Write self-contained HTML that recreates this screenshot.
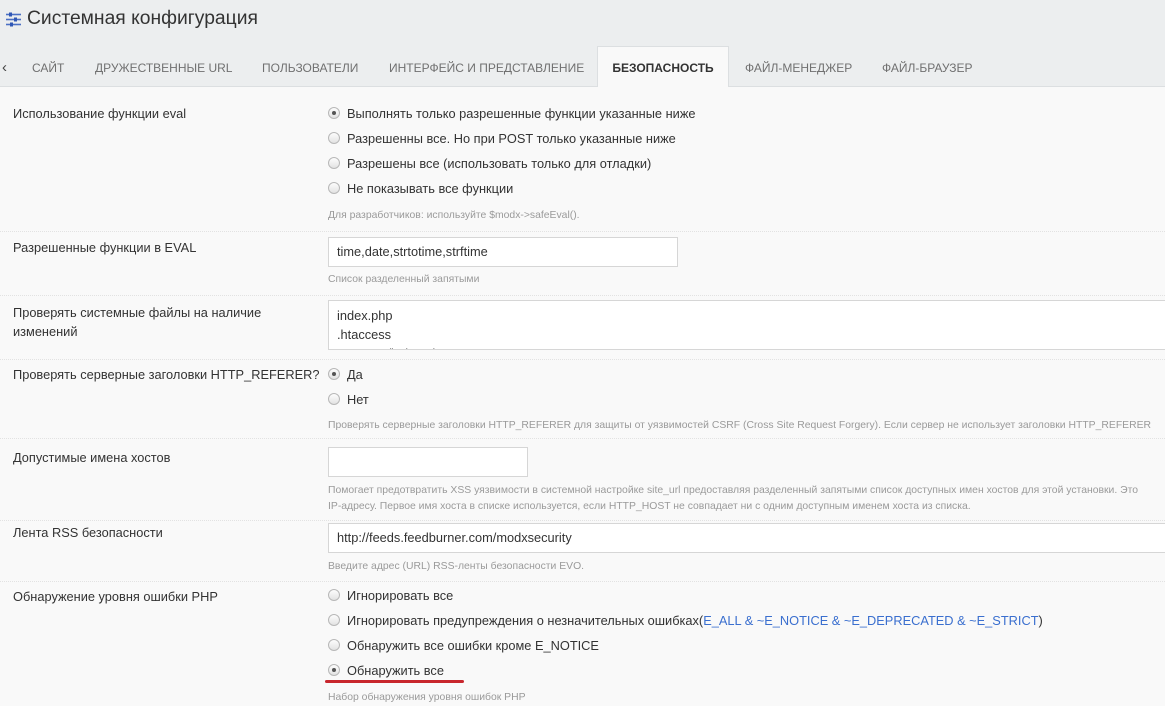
<!DOCTYPE html>
<html><head><meta charset="utf-8"><style>
body{margin:0;width:1165px;height:706px;overflow:hidden;background:#f9f9f9;font-family:"Liberation Sans",Arial,sans-serif;color:#333;position:relative}
.a{position:absolute;white-space:nowrap}
.hdr{position:absolute;left:0;top:0;width:1165px;height:86px;background:#eceeef;border-bottom:1px solid #dcdfe1}
.tab{position:absolute;top:61px;font-size:12px;color:#707070}
.lbl{font-size:12.8px;color:#333}
.opt{font-size:12.8px;color:#333}
.hint{font-size:10.4px;color:#9a9a9a}
.r{position:absolute;width:12px;height:12px;border-radius:50%;border:1px solid #b8b8b8;background:linear-gradient(#fdfdfd,#e2e2e2);box-sizing:border-box}
.r.on::after{content:"";position:absolute;left:3px;top:3px;width:4px;height:4px;border-radius:50%;background:#555}
.sep{position:absolute;left:0;width:1165px;border-top:1px dotted #e2e2e2}
.in{position:absolute;background:#fff;border:1px solid #d6d6d6;box-sizing:border-box;font-size:12.8px;color:#333;padding-left:8px}
</style></head><body>
<div class="hdr"></div>
<svg class="a" style="left:5px;top:11px" width="17" height="17" viewBox="0 0 17 17"><g stroke="#4a6fc4" stroke-width="1.6"><line x1="1" y1="3.5" x2="16" y2="3.5"/><line x1="1" y1="8.5" x2="16" y2="8.5"/><line x1="1" y1="13.5" x2="16" y2="13.5"/></g><g fill="#2f57b5"><rect x="4" y="1.5" width="3" height="4"/><rect x="9" y="6.5" width="3" height="4"/><rect x="5" y="11.5" width="3" height="4"/></g></svg>
<div class="a" style="left:27px;top:8px;font-size:19.3px;color:#333">Системная конфигурация</div>
<div class="a" style="left:2px;top:59px;font-size:15px;color:#444">&#8249;</div>
<div class="tab a" style="left:32px">САЙТ</div>
<div class="tab a" style="left:95px">ДРУЖЕСТВЕННЫЕ URL</div>
<div class="tab a" style="left:262px">ПОЛЬЗОВАТЕЛИ</div>
<div class="tab a" style="left:389px">ИНТЕРФЕЙС И ПРЕДСТАВЛЕНИЕ</div>
<div class="a" style="left:597px;top:46px;width:132px;height:41px;background:#f9f9f9;border:1px solid #dcdfe1;border-bottom:none;box-sizing:border-box"></div>
<div class="tab a" style="left:599px;width:128px;text-align:center;color:#333;font-weight:bold">БЕЗОПАСНОСТЬ</div>
<div class="tab a" style="left:745px">ФАЙЛ-МЕНЕДЖЕР</div>
<div class="tab a" style="left:882px">ФАЙЛ-БРАУЗЕР</div>

<div class="a lbl" style="left:13px;top:106px">Использование функции eval</div>
<div class="r on" style="left:328px;top:107px"></div><div class="a opt" style="left:347px;top:106px">Выполнять только разрешенные функции указанные ниже</div>
<div class="r" style="left:328px;top:132px"></div><div class="a opt" style="left:347px;top:131px">Разрешенны все. Но при POST только указанные ниже</div>
<div class="r" style="left:328px;top:157px"></div><div class="a opt" style="left:347px;top:156px">Разрешены все (использовать только для отладки)</div>
<div class="r" style="left:328px;top:182px"></div><div class="a opt" style="left:347px;top:181px">Не показывать все функции</div>
<div class="a hint" style="left:328px;top:210px">Для разработчиков: используйте $modx-&gt;safeEval().</div>
<div class="sep" style="top:231px"></div>

<div class="a lbl" style="left:13px;top:240px">Разрешенные функции в EVAL</div>
<div class="in" style="left:328px;top:237px;width:350px;height:30px;line-height:28px">time,date,strtotime,strftime</div>
<div class="a hint" style="left:328px;top:274px">Список разделенный запятыми</div>
<div class="sep" style="top:295px"></div>

<div class="a lbl" style="left:13px;top:303px;line-height:19px">Проверять системные файлы на наличие<br>изменений</div>
<div class="in" style="left:328px;top:300px;width:850px;height:50px;overflow:hidden;line-height:19px;padding-top:5px">index.php<br>.htaccess<br>manager/index.php</div>
<div class="sep" style="top:359px"></div>

<div class="a lbl" style="left:13px;top:367px">Проверять серверные заголовки HTTP_REFERER?</div>
<div class="r on" style="left:328px;top:368px"></div><div class="a opt" style="left:347px;top:367px">Да</div>
<div class="r" style="left:328px;top:393px"></div><div class="a opt" style="left:347px;top:392px">Нет</div>
<div class="a hint" style="left:328px;top:420px">Проверять серверные заголовки HTTP_REFERER для защиты от уязвимостей CSRF (Cross Site Request Forgery). Если сервер не использует заголовки HTTP_REFERER</div>
<div class="sep" style="top:438px"></div>

<div class="a lbl" style="left:13px;top:450px">Допустимые имена хостов</div>
<div class="in" style="left:328px;top:447px;width:200px;height:30px"></div>
<div class="a hint" style="left:328px;top:485px">Помогает предотвратить XSS уязвимости в системной настройке site_url предоставляя разделенный запятыми список доступных имен хостов для этой установки. Это</div>
<div class="a hint" style="left:328px;top:501px">IP-адресу. Первое имя хоста в списке используется, если HTTP_HOST не совпадает ни с одним доступным именем хоста из списка.</div>
<div class="sep" style="top:520px"></div>

<div class="a lbl" style="left:13px;top:525px">Лента RSS безопасности</div>
<div class="in" style="left:328px;top:523px;width:850px;height:30px;line-height:28px">http://feeds.feedburner.com/modxsecurity</div>
<div class="a hint" style="left:328px;top:561px">Введите адрес (URL) RSS-ленты безопасности EVO.</div>
<div class="sep" style="top:581px"></div>

<div class="a lbl" style="left:13px;top:589px">Обнаружение уровня ошибки PHP</div>
<div class="r" style="left:328px;top:589px"></div><div class="a opt" style="left:347px;top:588px">Игнорировать все</div>
<div class="r" style="left:328px;top:614px"></div><div class="a opt" style="left:347px;top:613px">Игнорировать предупреждения о незначительных ошибках(<span style="color:#3a6fcf">E_ALL &amp; ~E_NOTICE &amp; ~E_DEPRECATED &amp; ~E_STRICT</span>)</div>
<div class="r" style="left:328px;top:639px"></div><div class="a opt" style="left:347px;top:638px">Обнаружить все ошибки кроме E_NOTICE</div>
<div class="r on" style="left:328px;top:664px"></div><div class="a opt" style="left:347px;top:663px">Обнаружить все</div>
<div class="a" style="left:325px;top:680px;width:139px;height:3px;background:#c8262d;border-radius:2px"></div>
<div class="a hint" style="left:328px;top:692px">Набор обнаружения уровня ошибок PHP</div>
</body></html>
